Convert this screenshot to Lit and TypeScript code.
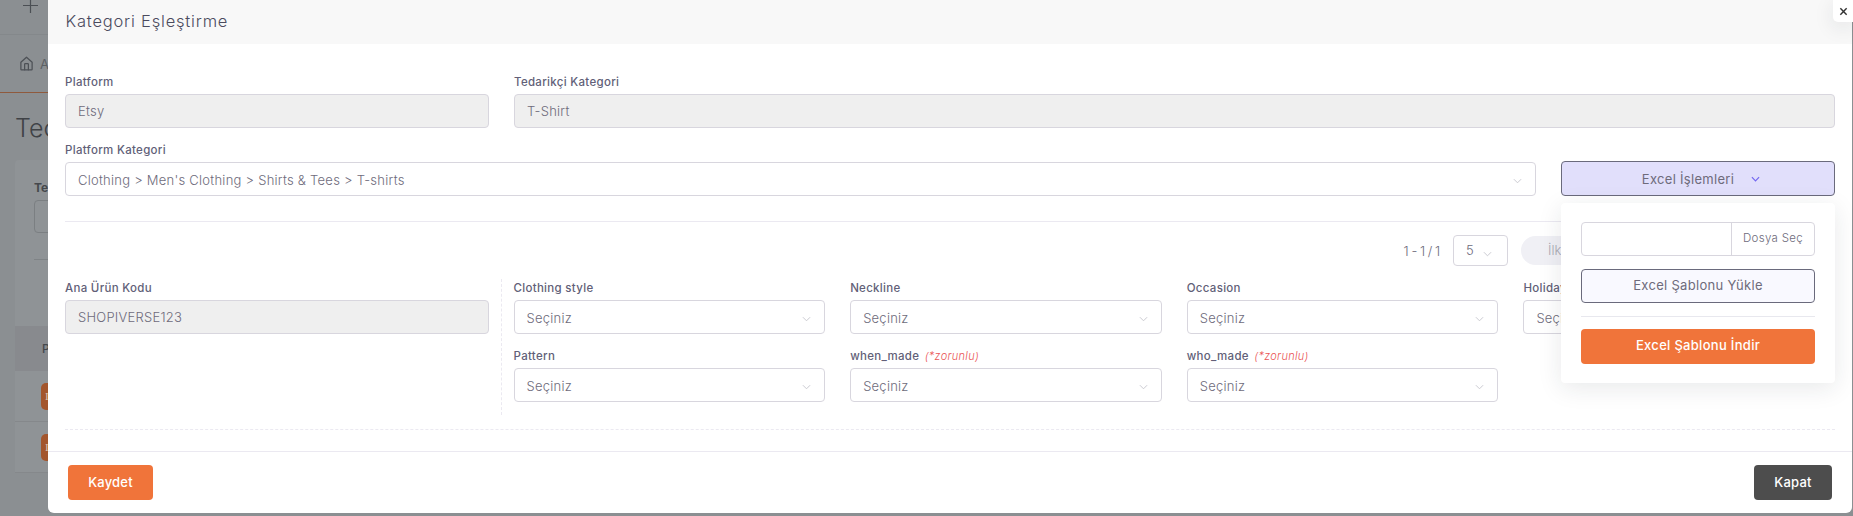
import { LitElement, html, css, svg } from "lit";
import { customElement } from "lit/decorators.js";

const chevron = svg`<svg class="chev" viewBox="0 0 10 6" width="9" height="6"><polyline points="1,1 5,5 9,1" fill="none" stroke="currentColor" stroke-width="1"/></svg>`;

@customElement("app-root")
export class AppRoot extends LitElement {
  static styles = css`
    :host { display: block; position: relative; width: 1853px; height: 516px; overflow: hidden; background: #8b8f92; font-family: Inter, "Open Sans", sans-serif; color: #6e6b7b; }
    * { box-sizing: border-box; }

    .backdrop { width: 48px; height: 516px; display: flex; flex-direction: column; overflow: hidden; white-space: nowrap; }
    .bar { height: 35px; border-bottom: 1px solid #84888b; padding: 0 0 0 23px; flex: none; }
    .bar svg { display: block; margin-top: -2px; }
    .crumbs { height: 58px; border-bottom: 1px solid #8f5a3d; display: flex; align-items: center; gap: 6px; padding: 0 0 0 19px; flex: none; color: #5c6064; font-size: 13px; }
    .crumbs svg { flex: none; margin-top: -1px; }
    .bd-title { height: 67px; padding: 20px 0 0 15px; font-size: 25px; font-weight: 300; color: #3f4246; line-height: 30px; flex: none; }
    .card { margin-left: 15px; height: 166px; background: #8f9396; padding: 21px 0 0 19px; border-radius: 4px 0 0 0; flex: none; }
    .card b { font-size: 12px; color: #45484c; display: block; line-height: 14px; }
    .bd-input { width: 40px; height: 33px; margin-top: 5px; border: 1px solid #7b7f82; border-radius: 4px; }
    .bd-line { height: 1px; background: #7f8386; margin-top: 26px; }
    .thead { margin-left: 15px; height: 45px; background: #888a8e; padding: 16px 0 0 27px; font-size: 12px; font-weight: 500; color: #45484c; flex: none; line-height: 14px; }
    .trow { margin-left: 15px; height: 51px; background: #8f9396; border-bottom: 1px solid #85888b; padding: 12px 0 0 26px; flex: none; }
    .badge { display: block; width: 20px; height: 27px; background: #a3562d; border-radius: 5px; color: #d8c5b8; font-size: 11px; line-height: 27px; padding-left: 4px; font-family: "Liberation Serif", serif; }

    .modal { position: absolute; left: 48px; top: 0; width: 1804px; height: 513px; background: #fff; border-radius: 0 0 6px 6px; display: flex; flex-direction: column; }
    .head { height: 44px; background: #f8f8f8; padding-left: 17.5px; font-size: 16.5px; font-weight: 300; letter-spacing: 0.8px; line-height: 43px; color: #4b4b5e; flex: none; }
    .close { position: absolute; right: -1px; top: 0; width: 20px; height: 22px; background: #fff; border-radius: 0 0 0 5px; box-shadow: 0 5px 20px rgba(34,41,47,.1); display: flex; align-items: center; justify-content: center; }

    .body { flex: 1; padding: 30px 17px 0; display: flex; flex-direction: column; }
    .row1 { display: grid; grid-template-columns: 424px 1fr; gap: 25px; }
    .row2 { display: grid; grid-template-columns: 1471px 1fr; gap: 25px; margin-top: 14px; align-items: end; }
    label { display: block; height: 16px; margin-bottom: 4px; font-size: 11.5px; font-weight: 500; letter-spacing: 0.3px; line-height: 17px; color: #625f78; white-space: nowrap; }
    label em { font-weight: 300; color: #ea5455; font-size: 11px; margin-left: 2px; }
    .ctl { height: 34px; border: 1px solid #d8d6de; border-radius: 4px; padding: 1px 12px 0; display: flex; align-items: center; justify-content: space-between; font-size: 13px; font-weight: 300; letter-spacing: 0.25px; color: #6e6b7b; background: #fff; white-space: nowrap; }
    .ctl.off { background: #efefef; padding-top: 0; }
    .ctl .chev { color: #c4c4cc; margin-right: 1px; margin-top: 2px; flex: none; }

    .excel { position: relative; }
    .excel-btn { height: 35px; width: 100%; background: #e1dffb; border: 1px solid #6a6a7c; border-radius: 4px; display: flex; align-items: center; justify-content: center; gap: 17px; padding-left: 6px; font-size: 13px; font-weight: 400; letter-spacing: 0.3px; color: #6e6b7b; }
    .excel-btn .chev { color: #7367f0; margin-top: 1px; }
    .excel-btn .chev polyline { stroke-width: 1.3; }
    .menu { position: absolute; left: 0; right: 0; top: 42px; height: 180px; z-index: 2; background: #fff; border-radius: 4px; padding: 19px 20px; box-shadow: 0 5px 25px rgba(34,41,47,.1); display: flex; flex-direction: column; }
    .file { height: 34px; border: 1px solid #d8d6de; border-radius: 4px; display: flex; justify-content: flex-end; }
    .file span { width: 83px; border-left: 1px solid #d8d6de; font-size: 11.5px; font-weight: 300; letter-spacing: 0.3px; line-height: 30px; text-align: center; color: #6e6b7b; }
    .upload { height: 34px; margin-top: 13px; background: #f9f9ff; border: 1px solid #6a6a7c; border-radius: 4px; text-align: center; line-height: 30px; font-size: 13px; font-weight: 400; letter-spacing: 0.3px; color: #6e6b7b; }
    .menu hr { border: 0; height: 1px; background: #e8e8ee; margin: 13px 0 12px; width: 100%; flex: none; }
    .dl { height: 35px; background: #f0743a; border-radius: 4px; text-align: center; line-height: 33px; color: #fff; font-size: 13px; font-weight: 500; letter-spacing: 0.3px; }

    .rule { height: 1px; background: #ebe9f1; margin-top: 25px; flex: none; }
    .pager { display: flex; justify-content: flex-end; align-items: center; height: 31px; margin-top: 13px; gap: 13px; padding-right: 100px; flex: none; }
    .count { font-size: 13px; font-weight: 300; letter-spacing: 0; word-spacing: -1px; color: #6e6b7b; white-space: nowrap; }
    .size { width: 55px; height: 31px; border: 1px solid #d8d6de; border-radius: 4px; display: flex; align-items: center; gap: 9px; padding: 0 0 2px 12px; font-size: 13px; font-weight: 300; }
    .size .chev { color: #c4c4cc; margin-top: 8px; }
    .pill { width: 214px; height: 29px; background: #f0f0f5; border-radius: 15px; padding-left: 27px; font-size: 13px; font-weight: 300; line-height: 29px; color: #a9a9b3; }

    .products { display: grid; grid-template-columns: 424px 1fr; column-gap: 12px; margin-top: 13px; flex: none; }
    .base { padding-top: 1px; }
    .attrs { border-left: 1px dashed #ebe9f1; padding: 1px 0 13px 12px; display: grid; grid-template-columns: repeat(4, 1fr); gap: 14px 25px; height: 136px; margin-left: -0.5px; }
    .sep { height: 0; border-top: 1px dashed #ebe9f1; margin-top: 14px; flex: none; }

    .foot { height: 62px; flex: none; border-top: 1px solid #ebe9f1; padding: 13px 20px 0; display: flex; justify-content: space-between; align-items: flex-start; }
    .foot div { height: 35px; border-radius: 4px; color: #fff; font-size: 13px; font-weight: 500; line-height: 34px; text-align: center; letter-spacing: 0.2px; }
    .save { width: 85px; background: #f0743a; }
    .shut { width: 78px; background: #4d4d4d; }
  `;

  private field(name: string, req = false) {
    return html`<div><label>${name}${req ? html` <em><i>(*zorunlu)</i></em>` : ""}</label><div class="ctl">Seçiniz ${chevron}</div></div>`;
  }

  render() {
    return html`
      <div class="backdrop">
        <div class="bar"><svg width="15" height="15" viewBox="0 0 15 15"><path d="M7.5 0v15M0 7.5h15" stroke="#4b4f54" stroke-width="1.2" fill="none"/></svg></div>
        <div class="crumbs">
          <svg width="15" height="15" viewBox="0 0 24 24" fill="none" stroke="#4d5156" stroke-width="2" stroke-linecap="round" stroke-linejoin="round"><path d="M3 10l9-8 9 8v11a1 1 0 0 1-1 1H4a1 1 0 0 1-1-1z"/><path d="M9 22V13a1 1 0 0 1 1-1h4a1 1 0 0 1 1 1v9"/></svg>
          <span>A</span>
        </div>
        <div class="bd-title">Tec</div>
        <div class="card"><b>Te</b><div class="bd-input"></div><div class="bd-line"></div></div>
        <div class="thead">P</div>
        <div class="trow"><span class="badge">I</span></div>
        <div class="trow"><span class="badge">I</span></div>
      </div>

      <div class="modal">
        <div class="head">Kategori Eşleştirme</div>
        <div class="close"><svg width="9" height="9" viewBox="0 0 10 10"><path d="M1.5 1.5l7 7M8.5 1.5l-7 7" stroke="#333" stroke-width="1.6" fill="none"/></svg></div>
        <div class="body">
          <div class="row1">
            <div><label>Platform</label><div class="ctl off">Etsy</div></div>
            <div><label>Tedarikçi Kategori</label><div class="ctl off">T-Shirt</div></div>
          </div>
          <div class="row2">
            <div><label>Platform Kategori</label><div class="ctl">Clothing &gt; Men's Clothing &gt; Shirts &amp; Tees &gt; T-shirts ${chevron}</div></div>
            <div class="excel">
              <div class="excel-btn">Excel İşlemleri ${chevron}</div>
              <div class="menu">
                <div class="file"><span>Dosya Seç</span></div>
                <div class="upload">Excel Şablonu Yükle</div>
                <hr />
                <div class="dl">Excel Şablonu İndir</div>
              </div>
            </div>
          </div>
          <div class="rule"></div>
          <div class="pager">
            <span class="count">1 - 1 / 1</span>
            <div class="size">5 ${chevron}</div>
            <div class="pill">İlk</div>
          </div>
          <div class="products">
            <div class="base"><label>Ana Ürün Kodu</label><div class="ctl off">SHOPIVERSE123</div></div>
            <div class="attrs">
              ${this.field("Clothing style")}
              ${this.field("Neckline")}
              ${this.field("Occasion")}
              ${this.field("Holiday")}
              ${this.field("Pattern")}
              ${this.field("when_made", true)}
              ${this.field("who_made", true)}
            </div>
          </div>
          <div class="sep"></div>
        </div>
        <div class="foot">
          <div class="save">Kaydet</div>
          <div class="shut">Kapat</div>
        </div>
      </div>
    `;
  }
}
